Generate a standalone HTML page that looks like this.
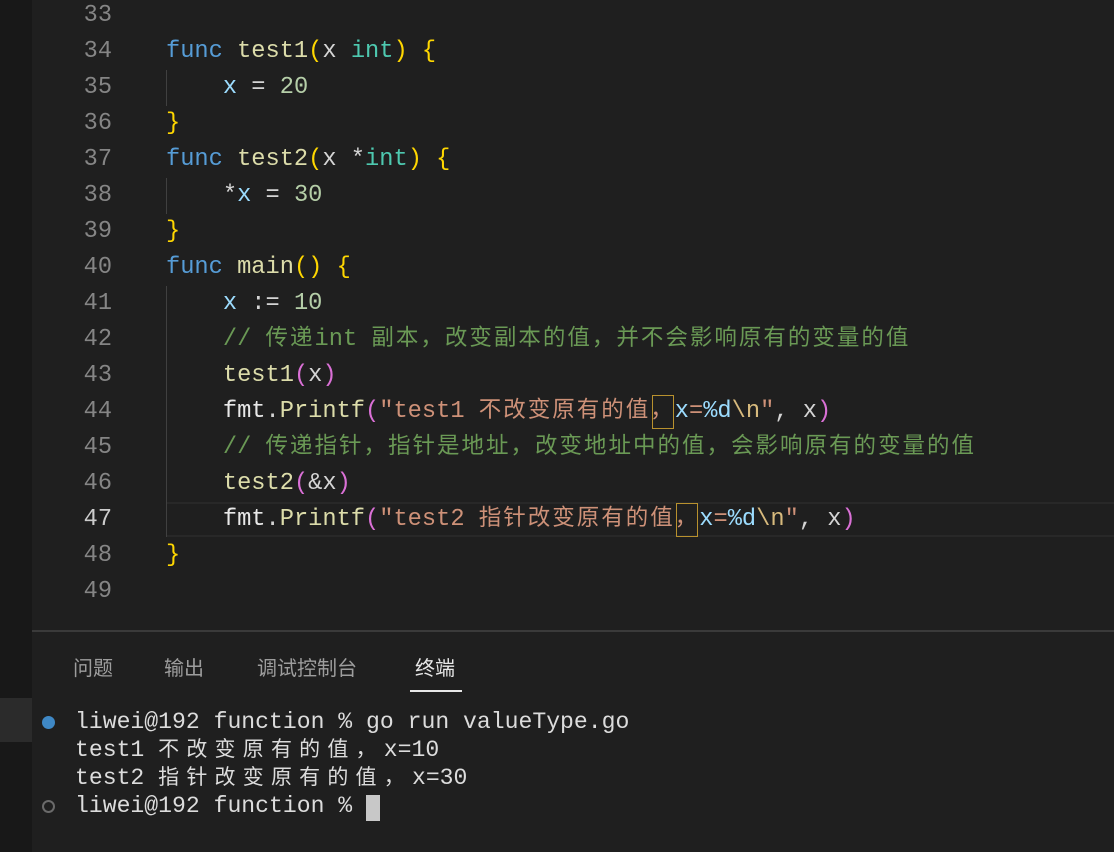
<!DOCTYPE html>
<html><head><meta charset="utf-8"><style>
*{margin:0;padding:0;box-sizing:border-box}
body{width:1114px;height:852px;background:#1f1f1f;overflow:hidden;position:relative;font-family:"Liberation Mono","Noto Sans CJK SC",monospace}
#strip{position:absolute;left:0;top:0;width:32px;height:852px;background:#181818}
#blk{position:absolute;left:0;top:698px;width:32px;height:44px;background:#2b2b2b}
.ln{position:absolute;left:40px;width:72px;text-align:right;color:#858585;font-size:23.6px;line-height:36px;height:36px}
.cl{position:absolute;left:166px;font-size:23.7px;line-height:36px;height:36px;white-space:pre;color:#d4d4d4}
.c{font-family:"Noto Sans CJK SC",sans-serif;font-size:22.5px;letter-spacing:2px;line-height:0}
.k{color:#569cd6}.f{color:#dcdcaa}.y{color:#ffd700}.p{color:#da70d6}.v{color:#9cdcfe}.t{color:#4ec9b0}.n{color:#b5cea8}.cm{color:#6a9955}.s{color:#ce9178}.e{color:#d7ba7d}.w{color:#e8e8e8}
.g{position:absolute;left:166px;width:1px;background:#404040}
.box{position:absolute;border:1.5px solid #b8912e;width:22px;height:34px}
.tab{position:absolute;top:653px;font-family:"Noto Sans CJK SC",sans-serif;font-size:20px;color:#9d9d9d;line-height:28px}
.tl{position:absolute;left:75px;font-size:23.1px;line-height:28px;height:28px;color:#dcdcdc;white-space:pre}
.tc{font-family:"Noto Sans CJK SC",sans-serif;font-size:21px;letter-spacing:7.2px;line-height:0}
</style></head><body>
<div id="strip"></div><div id="blk"></div>
<div style="position:absolute;left:166px;top:502px;width:948px;height:35px;border-top:2px solid #282828;border-bottom:2px solid #282828"></div>
<div class="g" style="top:70px;height:36px"></div>
<div class="g" style="top:178px;height:36px"></div>
<div class="g" style="top:286px;height:251px"></div>

<div class="ln" style="top:-2px">33</div>
<div class="ln" style="top:34px">34</div>
<div class="ln" style="top:70px">35</div>
<div class="ln" style="top:106px">36</div>
<div class="ln" style="top:142px">37</div>
<div class="ln" style="top:178px">38</div>
<div class="ln" style="top:214px">39</div>
<div class="ln" style="top:250px">40</div>
<div class="ln" style="top:286px">41</div>
<div class="ln" style="top:322px">42</div>
<div class="ln" style="top:358px">43</div>
<div class="ln" style="top:394px">44</div>
<div class="ln" style="top:430px">45</div>
<div class="ln" style="top:466px">46</div>
<div class="ln" style="top:502px;color:#cccccc">47</div>
<div class="ln" style="top:538px">48</div>
<div class="ln" style="top:574px">49</div>

<div class="cl" style="top:34px"><span class="k">func</span> <span class="f">test1</span><span class="y">(</span>x <span class="t">int</span><span class="y">)</span> <span class="y">{</span></div>
<div class="cl" style="top:70px">    <span class="v">x</span> = <span class="n">20</span></div>
<div class="cl" style="top:106px"><span class="y">}</span></div>
<div class="cl" style="top:142px"><span class="k">func</span> <span class="f">test2</span><span class="y">(</span>x *<span class="t">int</span><span class="y">)</span> <span class="y">{</span></div>
<div class="cl" style="top:178px">    *<span class="v">x</span> = <span class="n">30</span></div>
<div class="cl" style="top:214px"><span class="y">}</span></div>
<div class="cl" style="top:250px"><span class="k">func</span> <span class="f">main</span><span class="y">()</span> <span class="y">{</span></div>
<div class="cl" style="top:286px">    <span class="v">x</span> := <span class="n">10</span></div>
<div class="cl cm" style="top:322px">    // <span class="c">传递</span>int <span class="c">副本，改变副本的值，并不会影响原有的变量的值</span></div>
<div class="cl" style="top:358px">    <span class="f">test1</span><span class="p">(</span>x<span class="p">)</span></div>
<div class="cl" style="top:394px">    <span class="w">fmt</span>.<span class="f">Printf</span><span class="p">(</span><span class="s">"test1 <span class="c">不改变原有的值，</span></span><span class="v">x</span><span class="s">=</span><span class="v">%d</span><span class="e">\n</span><span class="s">"</span>, x<span class="p">)</span></div>
<div class="cl cm" style="top:430px">    // <span class="c">传递指针，指针是地址，改变地址中的值，会影响原有的变量的值</span></div>
<div class="cl" style="top:466px">    <span class="f">test2</span><span class="p">(</span>&amp;x<span class="p">)</span></div>
<div class="cl" style="top:502px">    <span class="w">fmt</span>.<span class="f">Printf</span><span class="p">(</span><span class="s">"test2 <span class="c">指针改变原有的值，</span></span><span class="v">x</span><span class="s">=</span><span class="v">%d</span><span class="e">\n</span><span class="s">"</span>, x<span class="p">)</span></div>
<div class="cl" style="top:538px"><span class="y">}</span></div>
<div class="box" style="left:652px;top:395px"></div>
<div class="box" style="left:676px;top:503px"></div>

<div style="position:absolute;left:32px;top:630px;width:1082px;height:2px;background:#3a3a3a"></div>
<div class="tab" style="left:73px">问题</div>
<div class="tab" style="left:164px">输出</div>
<div class="tab" style="left:257px">调试控制台</div>
<div class="tab" style="left:415px;color:#e7e7e7">终端</div>
<div style="position:absolute;left:410px;top:690px;width:52px;height:2px;background:#e7e7e7"></div>

<div style="position:absolute;left:42px;top:716px;width:13px;height:13px;border-radius:50%;background:#3f88c5"></div>
<div style="position:absolute;left:42px;top:800px;width:13px;height:13px;border-radius:50%;border:2px solid #6a6a6a"></div>
<div class="tl" style="top:708px">liwei@192 function % go run valueType.go</div>
<div class="tl" style="top:736px">test1 <span class="tc">不改变原有的值，</span>x=10</div>
<div class="tl" style="top:764px">test2 <span class="tc">指针改变原有的值，</span>x=30</div>
<div class="tl" style="top:792px">liwei@192 function % </div>
<div style="position:absolute;left:366px;top:795px;width:14px;height:26px;background:#c8c8c8"></div>
</body></html>
